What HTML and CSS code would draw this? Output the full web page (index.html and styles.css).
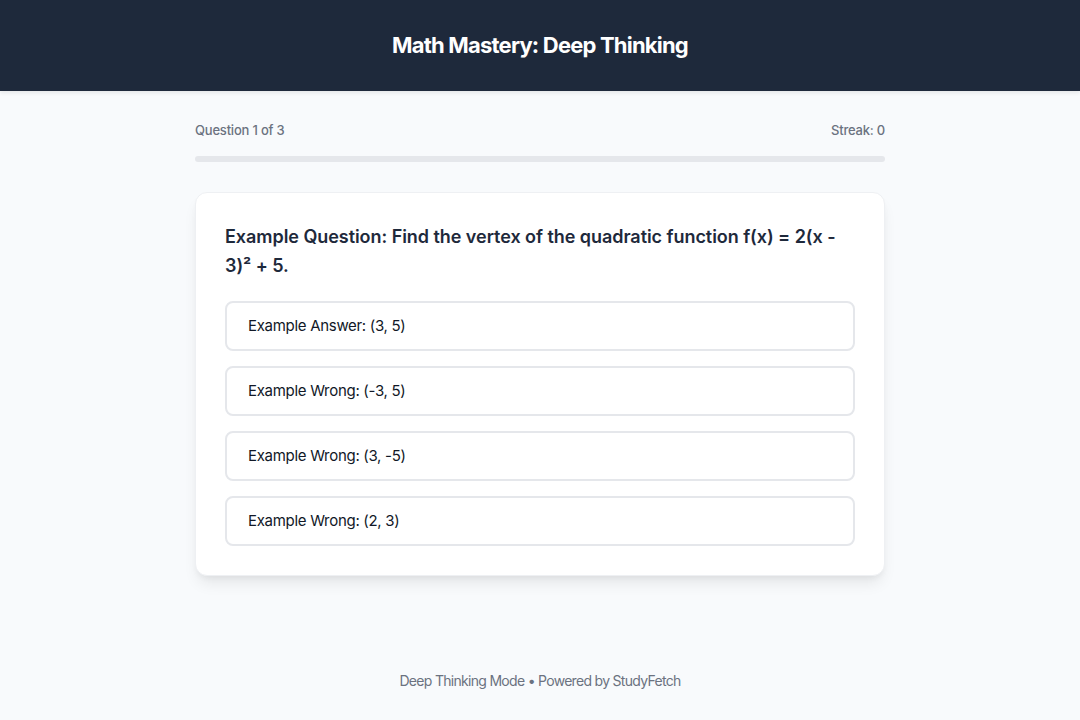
FILE: index.html
```html
<!DOCTYPE html>
<html lang="en">
<head>
<meta charset="utf-8">
<title>Math Mastery: Deep Thinking</title>
<link rel="stylesheet" href="styles.css">
</head>
<body>
<div class="page">
  <header class="header">
    <h1 class="title">Math Mastery: Deep Thinking</h1>
  </header>
  <main class="main">
    <div class="progress-info">
      <span>Question 1 of 3</span>
      <span>Streak: 0</span>
    </div>
    <div class="progress-bar"><div class="progress-fill" style="width: 0%"></div></div>
    <section class="card">
      <h2 class="question">Example Question: Find the vertex of the quadratic function f(x) = 2(x - 3)² + 5.</h2>
      <div class="options">
        <button class="option">Example Answer: (3, 5)</button>
        <button class="option">Example Wrong: (-3, 5)</button>
        <button class="option">Example Wrong: (3, -5)</button>
        <button class="option">Example Wrong: (2, 3)</button>
      </div>
    </section>
  </main>
  <footer class="footer">Deep Thinking Mode • Powered by StudyFetch</footer>
</div>
</body>
</html>
```

FILE: styles.css
```css
* { box-sizing: border-box; }
html, body { margin: 0; padding: 0; }
body {
  background: #f8fafc;
  font-family: Inter, "Noto Sans", sans-serif;
  color: #1e293b;
}
.page {
  min-height: 100vh;
  display: flex;
  flex-direction: column;
}
.header {
  background: #1e293b;
  padding: 30px 20px;
  text-align: center;
  box-shadow: 0 2px 4px rgba(0,0,0,0.08);
}
.title {
  margin: 0;
  color: #ffffff;
  font-size: 22px;
  font-weight: 700;
  line-height: 31px;
  letter-spacing: -0.8px;
}
.main {
  width: 690px;
  margin: 0 auto;
  padding-top: 30px;
  flex: 1;
}
.progress-info {
  display: flex;
  justify-content: space-between;
  font-size: 13px;
  font-weight: 500;
  color: #6b7280;
  line-height: 18px;
  letter-spacing: -0.2px;
}
.progress-bar {
  margin-top: 17px;
  height: 6px;
  background: #e5e7eb;
  border-radius: 3px;
  overflow: hidden;
}
.progress-fill {
  height: 100%;
  background: #3b82f6;
}
.card {
  margin-top: 30px;
  background: #ffffff;
  border: 1px solid #eef0f3;
  border-radius: 12px;
  padding: 29px;
  box-shadow: 0 10px 15px -3px rgba(0,0,0,0.08), 0 4px 6px -2px rgba(0,0,0,0.05);
}
.question {
  margin: 0 0 21px;
  font-size: 18px;
  font-weight: 600;
  line-height: 29px;
  color: #1e293b;
  letter-spacing: -0.05px;
}
.options {
  display: flex;
  flex-direction: column;
  gap: 15px;
}
.option {
  display: block;
  width: 100%;
  text-align: left;
  background: #ffffff;
  border: 2px solid #e5e7eb;
  border-radius: 8px;
  padding: 14px 21px;
  font-family: Inter, "Noto Sans", sans-serif;
  font-size: 15px;
  line-height: 18px;
  letter-spacing: -0.3px;
  color: #111827;
  cursor: pointer;
}
.footer {
  text-align: center;
  font-size: 14px;
  color: #6b7280;
  line-height: 20px;
  letter-spacing: -0.7px;
  padding: 20px 20px 29px;
}
```
